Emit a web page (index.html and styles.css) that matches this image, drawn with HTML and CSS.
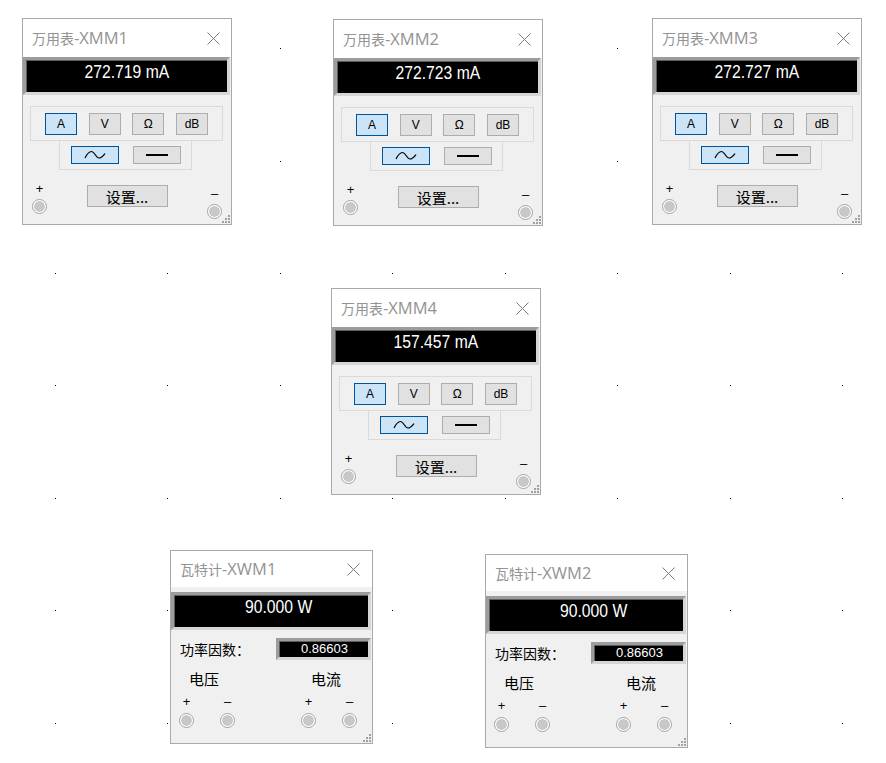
FILE: index.html
```html
<!DOCTYPE html>
<html lang="zh-CN">
<head>
<meta charset="utf-8">
<title>Instruments</title>
<link rel="stylesheet" href="styles.css">
</head>
<body>
<svg class="grid" width="886" height="763" viewBox="0 0 886 763" aria-hidden="true">
  <defs>
    <g id="row">
      <rect x="55" y="0" width="1" height="1"/><rect x="167" y="0" width="1" height="1"/>
      <rect x="280" y="0" width="1" height="1"/><rect x="392" y="0" width="1" height="1"/>
      <rect x="505" y="0" width="1" height="1"/><rect x="617" y="0" width="1" height="1"/>
      <rect x="730" y="0" width="1" height="1"/><rect x="842" y="0" width="1" height="1"/>
    </g>
  </defs>
  <use href="#row" y="48"/><use href="#row" y="161"/><use href="#row" y="273"/>
  <use href="#row" y="385"/><use href="#row" y="498"/><use href="#row" y="610"/>
  <use href="#row" y="723"/>
</svg>

<div class="win mm at-xmm1">
  <div class="titlebar"><span class="title">万用表<span class="tag">-XMM1</span></span><svg class="close" width="13" height="13" viewBox="0 0 13 13"><path d="M0.5 0.5L12.5 12.5M12.5 0.5L0.5 12.5"/></svg></div>
  <div class="lcd"><span class="val">272.719 mA</span></div>
  <div class="grp1">
    <span class="btn sel">A</span><span class="btn">V</span><span class="btn">Ω</span><span class="btn">dB</span>
  </div>
  <div class="grp2">
    <span class="btn wide sel"><svg width="22" height="10" viewBox="0 0 22 10"><path class="wave" d="M1 8C3 4 5 1.5 7.5 1.5C10.5 1.5 12 8 15 8C17.5 8 19 6 21 3.5"/></svg></span>
    <span class="btn wide"><span class="dc"></span></span>
  </div>
  <div class="bottom">
    <div class="term"><span class="sign">+</span><span class="jack"></span></div>
    <span class="btn set">设置...</span>
    <div class="term r"><span class="sign">–</span><span class="jack"></span></div>
  </div>
  <svg class="grip" width="8" height="8" viewBox="0 0 8 8"><rect x="6" y="0" width="2" height="2"/><rect x="3" y="3" width="2" height="2"/><rect x="6" y="3" width="2" height="2"/><rect x="0" y="6" width="2" height="2"/><rect x="3" y="6" width="2" height="2"/><rect x="6" y="6" width="2" height="2"/></svg>
</div>

<div class="win mm at-xmm2">
  <div class="titlebar"><span class="title">万用表<span class="tag">-XMM2</span></span><svg class="close" width="13" height="13" viewBox="0 0 13 13"><path d="M0.5 0.5L12.5 12.5M12.5 0.5L0.5 12.5"/></svg></div>
  <div class="lcd"><span class="val">272.723 mA</span></div>
  <div class="grp1">
    <span class="btn sel">A</span><span class="btn">V</span><span class="btn">Ω</span><span class="btn">dB</span>
  </div>
  <div class="grp2">
    <span class="btn wide sel"><svg width="22" height="10" viewBox="0 0 22 10"><path class="wave" d="M1 8C3 4 5 1.5 7.5 1.5C10.5 1.5 12 8 15 8C17.5 8 19 6 21 3.5"/></svg></span>
    <span class="btn wide"><span class="dc"></span></span>
  </div>
  <div class="bottom">
    <div class="term"><span class="sign">+</span><span class="jack"></span></div>
    <span class="btn set">设置...</span>
    <div class="term r"><span class="sign">–</span><span class="jack"></span></div>
  </div>
  <svg class="grip" width="8" height="8" viewBox="0 0 8 8"><rect x="6" y="0" width="2" height="2"/><rect x="3" y="3" width="2" height="2"/><rect x="6" y="3" width="2" height="2"/><rect x="0" y="6" width="2" height="2"/><rect x="3" y="6" width="2" height="2"/><rect x="6" y="6" width="2" height="2"/></svg>
</div>

<div class="win mm at-xmm3">
  <div class="titlebar"><span class="title">万用表<span class="tag">-XMM3</span></span><svg class="close" width="13" height="13" viewBox="0 0 13 13"><path d="M0.5 0.5L12.5 12.5M12.5 0.5L0.5 12.5"/></svg></div>
  <div class="lcd"><span class="val">272.727 mA</span></div>
  <div class="grp1">
    <span class="btn sel">A</span><span class="btn">V</span><span class="btn">Ω</span><span class="btn">dB</span>
  </div>
  <div class="grp2">
    <span class="btn wide sel"><svg width="22" height="10" viewBox="0 0 22 10"><path class="wave" d="M1 8C3 4 5 1.5 7.5 1.5C10.5 1.5 12 8 15 8C17.5 8 19 6 21 3.5"/></svg></span>
    <span class="btn wide"><span class="dc"></span></span>
  </div>
  <div class="bottom">
    <div class="term"><span class="sign">+</span><span class="jack"></span></div>
    <span class="btn set">设置...</span>
    <div class="term r"><span class="sign">–</span><span class="jack"></span></div>
  </div>
  <svg class="grip" width="8" height="8" viewBox="0 0 8 8"><rect x="6" y="0" width="2" height="2"/><rect x="3" y="3" width="2" height="2"/><rect x="6" y="3" width="2" height="2"/><rect x="0" y="6" width="2" height="2"/><rect x="3" y="6" width="2" height="2"/><rect x="6" y="6" width="2" height="2"/></svg>
</div>

<div class="win mm at-xmm4">
  <div class="titlebar"><span class="title">万用表<span class="tag">-XMM4</span></span><svg class="close" width="13" height="13" viewBox="0 0 13 13"><path d="M0.5 0.5L12.5 12.5M12.5 0.5L0.5 12.5"/></svg></div>
  <div class="lcd"><span class="val">157.457 mA</span></div>
  <div class="grp1">
    <span class="btn sel">A</span><span class="btn">V</span><span class="btn">Ω</span><span class="btn">dB</span>
  </div>
  <div class="grp2">
    <span class="btn wide sel"><svg width="22" height="10" viewBox="0 0 22 10"><path class="wave" d="M1 8C3 4 5 1.5 7.5 1.5C10.5 1.5 12 8 15 8C17.5 8 19 6 21 3.5"/></svg></span>
    <span class="btn wide"><span class="dc"></span></span>
  </div>
  <div class="bottom">
    <div class="term"><span class="sign">+</span><span class="jack"></span></div>
    <span class="btn set">设置...</span>
    <div class="term r"><span class="sign">–</span><span class="jack"></span></div>
  </div>
  <svg class="grip" width="8" height="8" viewBox="0 0 8 8"><rect x="6" y="0" width="2" height="2"/><rect x="3" y="3" width="2" height="2"/><rect x="6" y="3" width="2" height="2"/><rect x="0" y="6" width="2" height="2"/><rect x="3" y="6" width="2" height="2"/><rect x="6" y="6" width="2" height="2"/></svg>
</div>

<div class="win wm at-xwm1">
  <div class="titlebar"><span class="title">瓦特计<span class="tag">-XWM1</span></span><svg class="close" width="13" height="13" viewBox="0 0 13 13"><path d="M0.5 0.5L12.5 12.5M12.5 0.5L0.5 12.5"/></svg></div>
  <div class="lcd"><span class="val">90.000 W</span></div>
  <div class="pf"><span class="pf-label">功率因数：</span><span class="lcd small">0.86603</span></div>
  <div class="labels"><span>电压</span><span>电流</span></div>
  <div class="pairs">
    <div class="pair">
      <div class="term"><span class="sign">+</span><span class="jack"></span></div>
      <div class="term"><span class="sign">–</span><span class="jack"></span></div>
    </div>
    <div class="pair">
      <div class="term"><span class="sign">+</span><span class="jack"></span></div>
      <div class="term"><span class="sign">–</span><span class="jack"></span></div>
    </div>
  </div>
  <svg class="grip" width="8" height="8" viewBox="0 0 8 8"><rect x="6" y="0" width="2" height="2"/><rect x="3" y="3" width="2" height="2"/><rect x="6" y="3" width="2" height="2"/><rect x="0" y="6" width="2" height="2"/><rect x="3" y="6" width="2" height="2"/><rect x="6" y="6" width="2" height="2"/></svg>
</div>

<div class="win wm at-xwm2">
  <div class="titlebar"><span class="title">瓦特计<span class="tag">-XWM2</span></span><svg class="close" width="13" height="13" viewBox="0 0 13 13"><path d="M0.5 0.5L12.5 12.5M12.5 0.5L0.5 12.5"/></svg></div>
  <div class="lcd"><span class="val">90.000 W</span></div>
  <div class="pf"><span class="pf-label">功率因数：</span><span class="lcd small">0.86603</span></div>
  <div class="labels"><span>电压</span><span>电流</span></div>
  <div class="pairs">
    <div class="pair">
      <div class="term"><span class="sign">+</span><span class="jack"></span></div>
      <div class="term"><span class="sign">–</span><span class="jack"></span></div>
    </div>
    <div class="pair">
      <div class="term"><span class="sign">+</span><span class="jack"></span></div>
      <div class="term"><span class="sign">–</span><span class="jack"></span></div>
    </div>
  </div>
  <svg class="grip" width="8" height="8" viewBox="0 0 8 8"><rect x="6" y="0" width="2" height="2"/><rect x="3" y="3" width="2" height="2"/><rect x="6" y="3" width="2" height="2"/><rect x="0" y="6" width="2" height="2"/><rect x="3" y="6" width="2" height="2"/><rect x="6" y="6" width="2" height="2"/></svg>
</div>
</body>
</html>
```

FILE: styles.css
```css
* { box-sizing: border-box; }
html, body { margin: 0; padding: 0; }
body {
  width: 886px;
  height: 763px;
  position: relative;
  overflow: hidden;
  background: #fff;
  font-family: "Noto Sans CJK SC", "Liberation Sans", sans-serif;
  color: #000;
}
.grid { position: absolute; left: 0; top: 0; fill: #000; }

/* windows on the free canvas */
.win {
  position: absolute;
  border: 1px solid #a9a9a9;
  background: #f0f0f0;
  display: flex;
  flex-direction: column;
}
.mm { width: 210px; height: 207px; }
.wm { width: 203px; height: 194px; }
.at-xmm1 { left: 22px; top: 18px; }
.at-xmm2 { left: 333px; top: 19px; }
.at-xmm3 { left: 652px; top: 18px; }
.at-xmm4 { left: 331px; top: 288px; }
.at-xwm1 { left: 170px; top: 550px; }
.at-xwm2 { left: 485px; top: 554px; }

.titlebar {
  background: #fff;
  display: flex;
  align-items: center;
  justify-content: space-between;
  padding-left: 9px;
  flex: none;
}
.mm .titlebar { height: 38px; padding-right: 11px; }
.wm .titlebar { height: 36px; padding-right: 12px; }
.title {
  font-family: "Noto Sans CJK SC", sans-serif;
  font-size: 14px;
  color: #939393;
  line-height: 18px;
}
.tag {
  font-family: "Open Sans", "Noto Sans CJK SC", sans-serif;
  font-size: 16.5px;
}
.close path { stroke: #7c7c7c; stroke-width: 1; fill: none; }

/* black read-outs */
.lcd {
  flex: none;
  height: 38px;
  margin-right: 1px;
  background: #000;
  color: #fff;
  border: 3px solid;
  border-color: #9c9c9c #d6d6d6 #d6d6d6 #9c9c9c;
  box-shadow: inset 1px 1px 0 #5e5e5e;
  display: flex;
  justify-content: center;
  align-items: flex-start;
  padding-top: 2px;
  font-family: "Liberation Sans", sans-serif;
  font-size: 18.5px;
  line-height: 20px;
}
.val { display: inline-block; transform: scaleX(0.85); white-space: nowrap; }
.wm .lcd { margin-top: 5px; padding-left: 16px; }

/* multimeter button groups */
.grp1 {
  flex: none;
  margin: 11px 0 0 7px;
  width: 193px;
  height: 35px;
  border: 1px solid #dadada;
  display: flex;
  justify-content: space-between;
  align-items: center;
  padding: 0 14px;
}
.grp2 {
  flex: none;
  margin: -1px 0 0 36px;
  width: 133px;
  height: 30px;
  border: 1px solid #dadada;
  display: flex;
  justify-content: center;
  align-items: center;
  gap: 14px;
}
.btn {
  width: 32px;
  height: 22px;
  border: 1px solid #adadad;
  background: #e1e1e1;
  display: flex;
  align-items: center;
  justify-content: center;
  font-family: "Liberation Sans", sans-serif;
  font-size: 12px;
}
.btn.sel { background: #cce4f7; border-color: #005499; }
.btn.wide { width: 48px; height: 18px; }
.wave { fill: none; stroke: #000; stroke-width: 1.2; }
.dc { width: 22px; height: 2px; background: #000; }

.bottom {
  flex: none;
  display: flex;
  justify-content: space-between;
  align-items: flex-start;
  padding: 0 9px;
}
.btn.set {
  width: 81px;
  margin-top: 15px;
  font-family: "Noto Sans CJK SC", sans-serif;
  font-size: 15px;
}

/* terminals */
.term {
  width: 15px;
  display: flex;
  flex-direction: column;
  align-items: center;
  margin-top: 12px;
}
.term.r { margin-top: 17px; }
.sign {
  height: 14px;
  line-height: 14px;
  font-family: "Liberation Sans", sans-serif;
  font-size: 13px;
}
.jack {
  margin-top: 3px;
  width: 15px;
  height: 15px;
  border-radius: 50%;
  border: 1px solid #a3a3a3;
  background: radial-gradient(circle, #c8c8c8 0, #c8c8c8 4.3px, #b9b9b9 4.8px, #fff 5.6px);
}

.grip { position: absolute; right: 1px; bottom: 1px; fill: #a0a0a0; }

/* wattmeter body */
.pf {
  flex: none;
  margin-top: 8px;
  height: 22px;
  display: flex;
  justify-content: space-between;
  align-items: center;
  padding-left: 9px;
}
.pf-label { font-size: 14px; line-height: 18px; }
.wm .lcd.small {
  width: 95px;
  height: 22px;
  margin: 0 1px 0 0;
  padding: 0 0 0 2px;
  align-items: center;
  font-family: "Liberation Sans", sans-serif;
  font-size: 13px;
  line-height: 14px;
}
.labels {
  flex: none;
  margin-top: 10px;
  display: flex;
  gap: 92px;
  padding-left: 18px;
  font-size: 15px;
  line-height: 18px;
}
.pairs {
  flex: none;
  display: flex;
  gap: 66px;
  padding-left: 8px;
  margin-top: 7px;
}
.pair { display: flex; gap: 26px; }
.pairs .term { margin-top: 0; }
.pairs .jack { margin-top: 4px; }
```
